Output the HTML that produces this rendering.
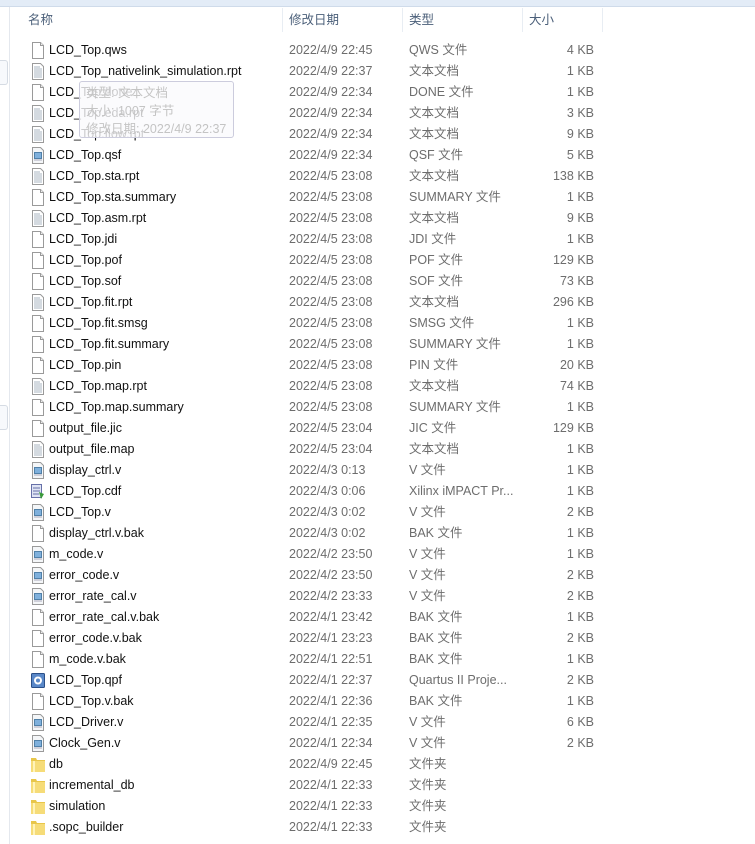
<!DOCTYPE html>
<html><head><meta charset="utf-8">
<style>
*{margin:0;padding:0;box-sizing:border-box}
body{width:755px;height:844px;background:#fff;position:relative;overflow:hidden;font-family:"Liberation Sans","Noto Sans CJK SC",sans-serif;font-size:12.5px}
.top{position:absolute;left:0;top:0;width:755px;height:7px;background:#e3ecf7;border-bottom:1px solid #cfdbea}
.lline{position:absolute;left:9px;top:7px;width:1px;height:837px;background:#e4e8ee}
.lbox{position:absolute;left:0;width:8px;height:25px;border:1px solid #d5dbe3;border-left:none;border-radius:0 3px 3px 0;background:#f7f9fc}
.hdr{position:absolute;top:7px;height:26px;line-height:26px;color:#4c607a;font-size:12.5px}
.sep{position:absolute;top:8px;width:1px;height:24px;background:#e8edf3}
.row{position:absolute;left:0;width:755px;height:21px;line-height:21px;white-space:nowrap}
.row svg{position:absolute;left:30px;top:2px}
.n{position:absolute;left:49px;color:#111}
.d{position:absolute;left:289px;color:#6d6d6d}
.t{position:absolute;left:409px;color:#6d6d6d}
.s{position:absolute;right:161px;color:#6d6d6d;text-align:right}
.tip{position:absolute;left:79px;top:81px;width:155px;height:57px;border:1px solid #ccd;border-radius:3px;background:rgba(250,250,252,0.8);color:#c4c4c4;padding:2px 6px;line-height:18px;font-size:12.5px}
</style></head><body>
<div class="top"></div>
<div class="lline"></div>
<div class="lbox" style="top:60px"></div>
<div class="lbox" style="top:405px"></div>
<div class="hdr" style="left:28px">名称</div>
<div class="hdr" style="left:289px">修改日期</div>
<div class="hdr" style="left:409px">类型</div>
<div class="hdr" style="left:529px">大小</div>
<div class="sep" style="left:282px"></div>
<div class="sep" style="left:402px"></div>
<div class="sep" style="left:522px"></div>
<div class="sep" style="left:602px"></div>
<svg width="0" height="0" style="position:absolute">
<defs>
<symbol id="B" viewBox="0 0 16 17"><path d="M2.5 .5h8l3 3v13h-11z" fill="#fff" stroke="#9a9a9a"/><path d="M10.5 .5v3h3" fill="#eee" stroke="#9a9a9a"/></symbol>
<symbol id="T" viewBox="0 0 16 17"><path d="M2.5 .5h8l3 3v13h-11z" fill="#fff" stroke="#9a9a9a"/><path d="M4 4h6M4 6h8M4 8h8M4 10h8M4 12h8M4 14h8" stroke="#a9b4c2"/></symbol>
<symbol id="V" viewBox="0 0 16 17"><path d="M2.5 .5h8l3 3v13h-11z" fill="#f4f6f8" stroke="#9a9a9a"/><rect x="4.5" y="5.5" width="7" height="6" fill="#7fb0dc" stroke="#5080a8"/><path d="M4 13h8" stroke="#aab"/></symbol>
<symbol id="F" viewBox="0 0 16 17"><path d="M1 2h5l1 2h8v12H1z" fill="#e8c64a"/><path d="M1 5h14v11H1z" fill="#f6dc78"/><path d="M4 5v11" stroke="#fff3b8" stroke-width="2"/></symbol>
<symbol id="C" viewBox="0 0 16 17"><rect x="1.5" y="1.5" width="10" height="13" fill="#dfe4f4" stroke="#6670a8"/><path d="M3 5h7M3 8h7M3 11h6" stroke="#6670a8"/><path d="M9 9l5 2-3 5z" fill="#3a9a3a"/></symbol>
<symbol id="Q" viewBox="0 0 16 17"><rect x="1.5" y="1.5" width="13" height="14" rx="1" fill="#5a88c8" stroke="#2a4f88"/><circle cx="8" cy="8.5" r="4" fill="#fff"/><circle cx="8" cy="8.5" r="2" fill="#5a88c8"/></symbol>
</defs></svg>

<div class="row" style="top:40px"><svg width="16" height="17"><use href="#B"/></svg><span class="n">LCD_Top.qws</span><span class="d">2022/4/9 22:45</span><span class="t">QWS 文件</span><span class="s">4 KB</span></div>
<div class="row" style="top:61px"><svg width="16" height="17"><use href="#T"/></svg><span class="n">LCD_Top_nativelink_simulation.rpt</span><span class="d">2022/4/9 22:37</span><span class="t">文本文档</span><span class="s">1 KB</span></div>
<div class="row" style="top:82px"><svg width="16" height="17"><use href="#B"/></svg><span class="n">LCD_Top.done</span><span class="d">2022/4/9 22:34</span><span class="t">DONE 文件</span><span class="s">1 KB</span></div>
<div class="row" style="top:103px"><svg width="16" height="17"><use href="#T"/></svg><span class="n">LCD_Top.eda.rpt</span><span class="d">2022/4/9 22:34</span><span class="t">文本文档</span><span class="s">3 KB</span></div>
<div class="row" style="top:124px"><svg width="16" height="17"><use href="#T"/></svg><span class="n">LCD_Top.flow.rpt</span><span class="d">2022/4/9 22:34</span><span class="t">文本文档</span><span class="s">9 KB</span></div>
<div class="row" style="top:145px"><svg width="16" height="17"><use href="#V"/></svg><span class="n">LCD_Top.qsf</span><span class="d">2022/4/9 22:34</span><span class="t">QSF 文件</span><span class="s">5 KB</span></div>
<div class="row" style="top:166px"><svg width="16" height="17"><use href="#T"/></svg><span class="n">LCD_Top.sta.rpt</span><span class="d">2022/4/5 23:08</span><span class="t">文本文档</span><span class="s">138 KB</span></div>
<div class="row" style="top:187px"><svg width="16" height="17"><use href="#B"/></svg><span class="n">LCD_Top.sta.summary</span><span class="d">2022/4/5 23:08</span><span class="t">SUMMARY 文件</span><span class="s">1 KB</span></div>
<div class="row" style="top:208px"><svg width="16" height="17"><use href="#T"/></svg><span class="n">LCD_Top.asm.rpt</span><span class="d">2022/4/5 23:08</span><span class="t">文本文档</span><span class="s">9 KB</span></div>
<div class="row" style="top:229px"><svg width="16" height="17"><use href="#B"/></svg><span class="n">LCD_Top.jdi</span><span class="d">2022/4/5 23:08</span><span class="t">JDI 文件</span><span class="s">1 KB</span></div>
<div class="row" style="top:250px"><svg width="16" height="17"><use href="#B"/></svg><span class="n">LCD_Top.pof</span><span class="d">2022/4/5 23:08</span><span class="t">POF 文件</span><span class="s">129 KB</span></div>
<div class="row" style="top:271px"><svg width="16" height="17"><use href="#B"/></svg><span class="n">LCD_Top.sof</span><span class="d">2022/4/5 23:08</span><span class="t">SOF 文件</span><span class="s">73 KB</span></div>
<div class="row" style="top:292px"><svg width="16" height="17"><use href="#T"/></svg><span class="n">LCD_Top.fit.rpt</span><span class="d">2022/4/5 23:08</span><span class="t">文本文档</span><span class="s">296 KB</span></div>
<div class="row" style="top:313px"><svg width="16" height="17"><use href="#B"/></svg><span class="n">LCD_Top.fit.smsg</span><span class="d">2022/4/5 23:08</span><span class="t">SMSG 文件</span><span class="s">1 KB</span></div>
<div class="row" style="top:334px"><svg width="16" height="17"><use href="#B"/></svg><span class="n">LCD_Top.fit.summary</span><span class="d">2022/4/5 23:08</span><span class="t">SUMMARY 文件</span><span class="s">1 KB</span></div>
<div class="row" style="top:355px"><svg width="16" height="17"><use href="#B"/></svg><span class="n">LCD_Top.pin</span><span class="d">2022/4/5 23:08</span><span class="t">PIN 文件</span><span class="s">20 KB</span></div>
<div class="row" style="top:376px"><svg width="16" height="17"><use href="#T"/></svg><span class="n">LCD_Top.map.rpt</span><span class="d">2022/4/5 23:08</span><span class="t">文本文档</span><span class="s">74 KB</span></div>
<div class="row" style="top:397px"><svg width="16" height="17"><use href="#B"/></svg><span class="n">LCD_Top.map.summary</span><span class="d">2022/4/5 23:08</span><span class="t">SUMMARY 文件</span><span class="s">1 KB</span></div>
<div class="row" style="top:418px"><svg width="16" height="17"><use href="#B"/></svg><span class="n">output_file.jic</span><span class="d">2022/4/5 23:04</span><span class="t">JIC 文件</span><span class="s">129 KB</span></div>
<div class="row" style="top:439px"><svg width="16" height="17"><use href="#T"/></svg><span class="n">output_file.map</span><span class="d">2022/4/5 23:04</span><span class="t">文本文档</span><span class="s">1 KB</span></div>
<div class="row" style="top:460px"><svg width="16" height="17"><use href="#V"/></svg><span class="n">display_ctrl.v</span><span class="d">2022/4/3 0:13</span><span class="t">V 文件</span><span class="s">1 KB</span></div>
<div class="row" style="top:481px"><svg width="16" height="17"><use href="#C"/></svg><span class="n">LCD_Top.cdf</span><span class="d">2022/4/3 0:06</span><span class="t">Xilinx iMPACT Pr...</span><span class="s">1 KB</span></div>
<div class="row" style="top:502px"><svg width="16" height="17"><use href="#V"/></svg><span class="n">LCD_Top.v</span><span class="d">2022/4/3 0:02</span><span class="t">V 文件</span><span class="s">2 KB</span></div>
<div class="row" style="top:523px"><svg width="16" height="17"><use href="#B"/></svg><span class="n">display_ctrl.v.bak</span><span class="d">2022/4/3 0:02</span><span class="t">BAK 文件</span><span class="s">1 KB</span></div>
<div class="row" style="top:544px"><svg width="16" height="17"><use href="#V"/></svg><span class="n">m_code.v</span><span class="d">2022/4/2 23:50</span><span class="t">V 文件</span><span class="s">1 KB</span></div>
<div class="row" style="top:565px"><svg width="16" height="17"><use href="#V"/></svg><span class="n">error_code.v</span><span class="d">2022/4/2 23:50</span><span class="t">V 文件</span><span class="s">2 KB</span></div>
<div class="row" style="top:586px"><svg width="16" height="17"><use href="#V"/></svg><span class="n">error_rate_cal.v</span><span class="d">2022/4/2 23:33</span><span class="t">V 文件</span><span class="s">2 KB</span></div>
<div class="row" style="top:607px"><svg width="16" height="17"><use href="#B"/></svg><span class="n">error_rate_cal.v.bak</span><span class="d">2022/4/1 23:42</span><span class="t">BAK 文件</span><span class="s">1 KB</span></div>
<div class="row" style="top:628px"><svg width="16" height="17"><use href="#B"/></svg><span class="n">error_code.v.bak</span><span class="d">2022/4/1 23:23</span><span class="t">BAK 文件</span><span class="s">2 KB</span></div>
<div class="row" style="top:649px"><svg width="16" height="17"><use href="#B"/></svg><span class="n">m_code.v.bak</span><span class="d">2022/4/1 22:51</span><span class="t">BAK 文件</span><span class="s">1 KB</span></div>
<div class="row" style="top:670px"><svg width="16" height="17"><use href="#Q"/></svg><span class="n">LCD_Top.qpf</span><span class="d">2022/4/1 22:37</span><span class="t">Quartus II Proje...</span><span class="s">2 KB</span></div>
<div class="row" style="top:691px"><svg width="16" height="17"><use href="#B"/></svg><span class="n">LCD_Top.v.bak</span><span class="d">2022/4/1 22:36</span><span class="t">BAK 文件</span><span class="s">1 KB</span></div>
<div class="row" style="top:712px"><svg width="16" height="17"><use href="#V"/></svg><span class="n">LCD_Driver.v</span><span class="d">2022/4/1 22:35</span><span class="t">V 文件</span><span class="s">6 KB</span></div>
<div class="row" style="top:733px"><svg width="16" height="17"><use href="#V"/></svg><span class="n">Clock_Gen.v</span><span class="d">2022/4/1 22:34</span><span class="t">V 文件</span><span class="s">2 KB</span></div>
<div class="row" style="top:754px"><svg width="16" height="17"><use href="#F"/></svg><span class="n">db</span><span class="d">2022/4/9 22:45</span><span class="t">文件夹</span></div>
<div class="row" style="top:775px"><svg width="16" height="17"><use href="#F"/></svg><span class="n">incremental_db</span><span class="d">2022/4/1 22:33</span><span class="t">文件夹</span></div>
<div class="row" style="top:796px"><svg width="16" height="17"><use href="#F"/></svg><span class="n">simulation</span><span class="d">2022/4/1 22:33</span><span class="t">文件夹</span></div>
<div class="row" style="top:817px"><svg width="16" height="17"><use href="#F"/></svg><span class="n">.sopc_builder</span><span class="d">2022/4/1 22:33</span><span class="t">文件夹</span></div>

<div class="tip">类型: 文本文档<br>大小: 1007 字节<br>修改日期: 2022/4/9 22:37</div>
</body></html>
